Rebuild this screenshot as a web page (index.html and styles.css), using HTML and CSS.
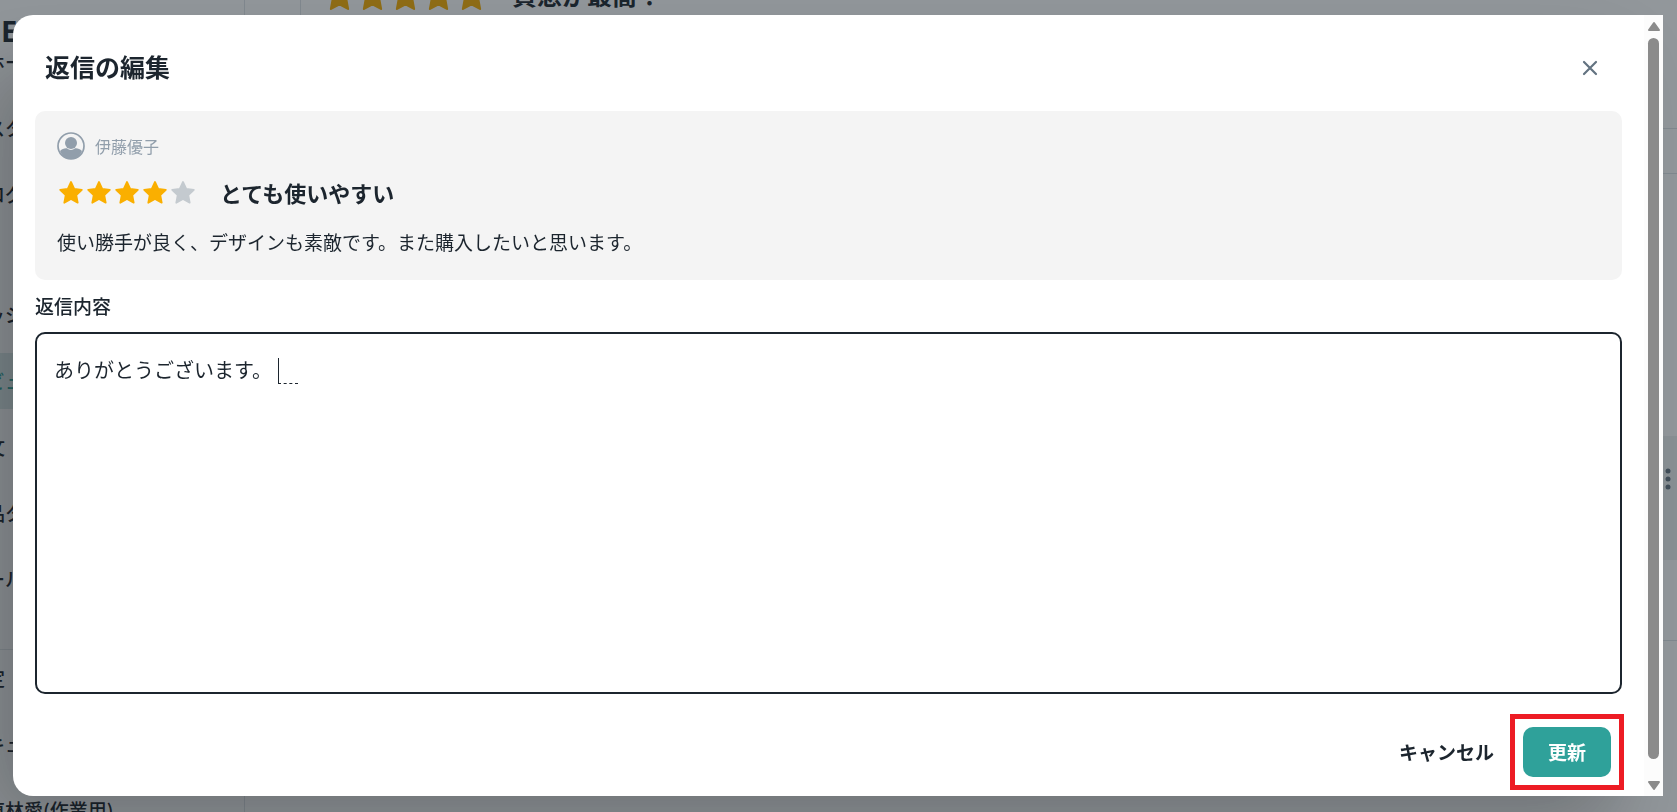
FILE: index.html
```
<!DOCTYPE html>
<html lang="ja">
<head>
  <meta charset="UTF-8" />
  <meta name="viewport" content="width=device-width, initial-scale=1.0"/>
  <title>返信の編集</title>
  <link rel="stylesheet" href="styles.css">
</head>
<body>
  <svg class="sprite" aria-hidden="true">
    <symbol id="star" viewBox="0 0 24 24">
      <path d="M12 1.8 15 8.2 22 9.1 16.9 14 18.2 21 12 17.6 5.8 21 7.1 14 2 9.1 9 8.2Z" fill="currentColor" stroke="currentColor" stroke-width="1.6" stroke-linejoin="round"/>
    </symbol>
  </svg>

  <div class="page">
    <nav class="sidebar">
      <div class="brand">E</div>
      <a class="home" href="#">ホーム</a>
      <a href="#">カスタマー</a>
      <a href="#">ブログ</a>
      <a class="group" href="#">バッジ</a>
      <a class="active" href="#">レビュー</a>
      <a href="#">注文</a>
      <a href="#">商品タグ</a>
      <a href="#">ツール</a>
      <div class="account">
        <a href="#">設定</a>
        <a href="#">セキュリティ</a>
        <div class="user">東林愛(作業用)</div>
      </div>
    </nav>
    <div class="content">
      <div class="review">
        <div class="stars">
          <svg><use href="#star"/></svg>
          <svg><use href="#star"/></svg>
          <svg><use href="#star"/></svg>
          <svg><use href="#star"/></svg>
          <svg><use href="#star"/></svg>
        </div>
        <h3>質感が最高！</h3>
      </div>
    </div>
    <div class="rows">
      <div class="row first"></div>
      <div class="row second"></div>
      <div class="row third"></div>
      <div class="row current">
        <svg width="6" height="24" viewBox="0 0 6 24" fill="currentColor">
          <circle cx="3" cy="4" r="2.5"/><circle cx="3" cy="12" r="2.5"/><circle cx="3" cy="20" r="2.5"/>
        </svg>
      </div>
      <div class="row last"></div>
    </div>
  </div>

  <div class="overlay">
    <div class="modal" role="dialog" aria-labelledby="modal-title">
      <form class="modal-body">
        <header>
          <h2 id="modal-title">返信の編集</h2>
          <button type="button" class="close" aria-label="閉じる">
            <svg width="16" height="16" viewBox="0 0 16 16" fill="none" stroke="currentColor" stroke-width="2.2" stroke-linecap="round">
              <path d="M2 2 14 14M14 2 2 14"/>
            </svg>
          </button>
        </header>

        <section class="card">
          <div class="author">
            <svg width="28" height="28" viewBox="0 0 28 28">
              <circle cx="14" cy="14" r="13" fill="none" stroke="currentColor" stroke-width="1.7"/>
              <circle cx="14" cy="11" r="6" fill="currentColor"/>
              <path d="M3 19C5 17 7.500 16 10 16.300 12.500 18.600 15.500 18.600 18 16.300 20.500 16 23 17 25 19 23 24.500 18.500 27 14 27S5 24.500 3 19Z" fill="currentColor"/>
            </svg>
            <span>伊藤優子</span>
          </div>
          <div class="rating">
            <div class="stars">
              <svg><use href="#star"/></svg>
              <svg><use href="#star"/></svg>
              <svg><use href="#star"/></svg>
              <svg><use href="#star"/></svg>
              <svg class="off"><use href="#star"/></svg>
            </div>
            <h3>とても使いやすい</h3>
          </div>
          <p>使い勝手が良く、デザインも素敵です。また購入したいと思います。</p>
        </section>

        <label for="reply">返信内容</label>
        <div class="field">
          <textarea id="reply">ありがとうございます。</textarea>
          <span class="caret"></span>
        </div>

        <footer>
          <button type="button" class="cancel">キャンセル</button>
          <div class="highlight">
            <button type="submit" class="submit">更新</button>
          </div>
        </footer>
      </form>

      <div class="scrollbar">
        <svg width="14" height="11" viewBox="0 0 14 11"><path d="M7 2 12 9H2Z" fill="currentColor" stroke="currentColor" stroke-width="2" stroke-linejoin="round"/></svg>
        <div class="thumb"></div>
        <svg width="14" height="11" viewBox="0 0 14 11"><path d="M7 9 12 2H2Z" fill="currentColor" stroke="currentColor" stroke-width="2" stroke-linejoin="round"/></svg>
      </div>
    </div>
  </div>
</body>
</html>
```
FILE: styles.css
```
:root {
  --text: #1c252e;
  --muted: #919eab;
  --star: #faaf00;
  --teal: #2fa19a;
}

* {
  box-sizing: border-box;
}

body {
  margin: 0;
  height: 100vh;
  overflow: hidden;
  color: var(--text);
  font-family: "Noto Sans CJK JP", sans-serif;
  font-size: 19px;
  line-height: 28px;
}

h2, h3, p {
  margin: 0;
}

button {
  border: 0;
  background: none;
  color: inherit;
  font: inherit;
  cursor: pointer;
}

.sprite {
  position: absolute;
  width: 0;
  height: 0;
}

/* page behind the dialog */
.page {
  display: flex;
  height: 100vh;
}

.sidebar {
  flex: 0 0 245px;
  border-right: 1px solid #dfe3e8;
  padding-top: 16px;
  white-space: nowrap;
  overflow: hidden;
}

.sidebar a {
  display: flex;
  align-items: center;
  height: 56px;
  margin-bottom: 10px;
  color: inherit;
  font-weight: 500;
  text-decoration: none;
  text-indent: -33px;
}

.sidebar .brand {
  padding-left: 1px;
  font: 700 29px/30px "Open Sans", sans-serif;
}

.sidebar .home {
  height: 32px;
  margin-bottom: 22px;
  text-indent: -14px;
}

.sidebar .group {
  margin-top: 65px;
}

.sidebar .active {
  background: #dcebea;
  color: var(--teal);
}

.account {
  margin-top: 42px;
  border-top: 1px solid #e4e8eb;
}

.user {
  margin-top: 24px;
  font-weight: 500;
  text-indent: -14px;
}

.content {
  flex: 1;
  padding: 0 55px;
}

.review {
  display: flex;
  gap: 24px;
  height: 200px;
  margin-top: -20px;
  border-left: 1px solid #dfe3e8;
  padding-left: 22px;
}

.stars {
  display: flex;
  color: var(--star);
}

.rating .stars {
  gap: 2px;
  padding-left: 1px;
}

.rating svg {
  width: 26px;
  height: 26px;
}

.stars .off {
  color: #c4cacf;
}

.review svg {
  width: 33px;
  height: 33px;
}

.review h3 {
  font-size: 25px;
}

.rows {
  width: 14px;
}

.row {
  border-bottom: 1px solid #dfe3e8;
}

.first {
  height: 129px;
}

.second {
  height: 45px;
}

.third {
  height: 262px;
  border: 0;
}

.current {
  height: 124px;
  padding: 31px 2px;
  border: 0;
  background: #eef2f2;
  color: #637381;
}

.last {
  height: 81px;
}

/* dialog */
.overlay {
  position: fixed;
  inset: 0;
  padding: 15px 14px 16px 13px;
  background: rgba(28, 37, 46, 0.48);
}

.modal {
  display: flex;
  height: 100%;
  background: #fff;
  border-radius: 20px 0 0 20px;
  box-shadow: -40px 40px 80px -8px rgba(0, 0, 0, 0.24);
}

.modal-body {
  flex: 1;
  display: flex;
  flex-direction: column;
  padding: 0 22px 6px;
}

.modal header {
  display: flex;
  align-items: center;
  justify-content: space-between;
  height: 96px;
  padding: 10px 24px 0 10px;
}

.modal h2 {
  padding-bottom: 4px;
  font-size: 25px;
}

.close {
  display: flex;
  padding: 0;
  color: #637381;
}

.card {
  display: flex;
  flex-direction: column;
  padding: 21px 22px 24px;
  border-radius: 10px;
  background: #f4f4f4;
}

.author {
  display: flex;
  align-items: center;
  gap: 10px;
  color: var(--muted);
  font-size: 16px;
}

.rating {
  display: flex;
  align-items: center;
  gap: 24px;
  margin: 19px 0 21px;
}

.rating h3 {
  padding-bottom: 2px;
  font-size: 22px;
  line-height: 26px;
}

.modal label {
  margin: 12px 0;
  font-weight: 500;
}

.field {
  position: relative;
  flex: 1;
}

textarea {
  display: block;
  width: 100%;
  height: 100%;
  padding: 22px 17px;
  border: 2px solid var(--text);
  border-radius: 10px;
  outline: 0;
  background: #fff;
  color: inherit;
  font-family: inherit;
  font-size: 20px;
  line-height: 28px;
  resize: none;
}

.caret {
  position: absolute;
  top: 26px;
  left: 243px;
  width: 20px;
  height: 26px;
  border-left: 1px solid var(--text);
  border-bottom: 1px dashed var(--text);
}

.modal footer {
  display: flex;
  align-items: center;
  justify-content: flex-end;
  gap: 8px;
  margin: 20px -2px 0 0;
}

.cancel {
  padding: 8px;
  font-weight: 700;
}

.highlight {
  padding: 8px;
  border: 5px solid #ed1c24;
}

.submit {
  display: block;
  width: 88px;
  height: 50px;
  border-radius: 10px;
  background: var(--teal);
  color: #fff;
  font-weight: 700;
}

.scrollbar {
  display: flex;
  flex-direction: column;
  align-items: center;
  width: 19px;
  padding: 6px 0 5px;
  background: #fcfcfc;
  color: #8b8b8b;
}

.thumb {
  flex: 1;
  width: 11px;
  margin: 6px 0 21px;
  border-radius: 6px;
  background: #8b8b8b;
}
```
